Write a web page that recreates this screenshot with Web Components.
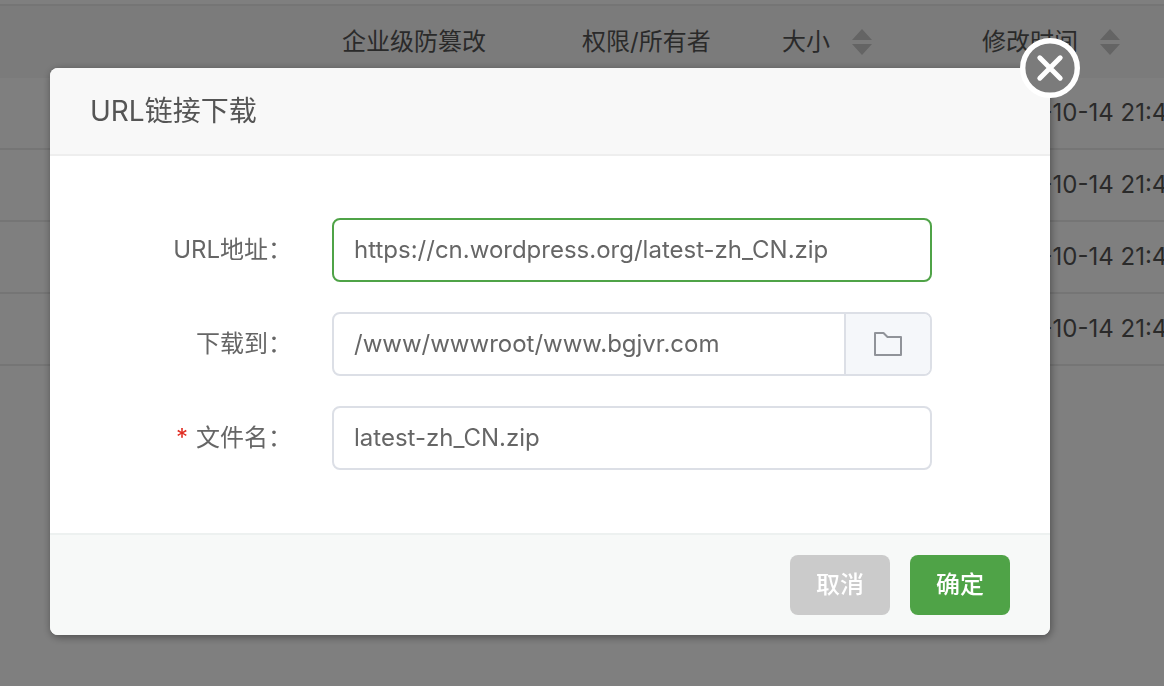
<!DOCTYPE html>
<html lang="zh-CN">
<head>
<meta charset="utf-8">
<title>URL链接下载</title>
<style>
  html, body { height: 100%; margin: 0; }
  body {
    overflow: hidden;
    background: #fff;
    color: #666;
    font: 24px/32px Inter, "Noto Sans CJK SC", sans-serif;
  }
</style>
</head>
<body>
<file-table></file-table>
<modal-dialog heading="URL链接下载">
  <form-field label="URL地址：" name="url" value="https://cn.wordpress.org/latest-zh_CN.zip" active></form-field>
  <form-field label="下载到：" name="path" value="/www/wwwroot/www.bgjvr.com">
    <folder-button slot="append"></folder-button>
  </form-field>
  <form-field label="文件名：" name="filename" value="latest-zh_CN.zip" required></form-field>
  <action-button slot="footer" kind="cancel">取消</action-button>
  <action-button slot="footer" kind="confirm">确定</action-button>
</modal-dialog>

<script>
class BaseElement extends HTMLElement {
  render(html) {
    this.attachShadow({ mode: 'open' }).innerHTML = html;
  }
}

customElements.define('sort-arrows', class extends BaseElement {
  connectedCallback() {
    this.render(`
      <style>
        :host { display: block; width: 20px; height: 28px; }
        svg { display: block; fill: #c8c8c8; }
      </style>
      <svg width="20" height="28" viewBox="0 0 20 28" aria-hidden="true">
        <path d="M10 1 20 12H0zM0 16h20L10 27z"/>
      </svg>`);
  }
});

customElements.define('file-table', class extends BaseElement {
  connectedCallback() {
    const row = '<tr><td></td><td></td><td></td><td></td><td>2024-10-14 21:4</td></tr>';
    this.render(`
      <style>
        :host { display: block; padding-top: 4px; overflow: hidden; color: #555; }
        table { width: 100%; table-layout: fixed; border-collapse: separate; border-spacing: 0; border-top: 2px solid #ebebeb; }
        th, td { box-sizing: border-box; height: 72px; padding: 0 0 0 20px; text-align: left; font-weight: 400; white-space: nowrap; }
        th { background: #f6f6f6; }
        td { border-bottom: 2px solid #ebebeb; }
        .name { width: 322px; }
        .tamper { width: 240px; }
        .fixed { width: 200px; }
        .sort { display: flex; align-items: center; gap: 22px; }
      </style>
      <table>
        <thead><tr>
          <th class="name"></th>
          <th class="tamper">企业级防篡改</th>
          <th class="fixed">权限/所有者</th>
          <th class="fixed"><div class="sort">大小<sort-arrows></sort-arrows></div></th>
          <th><div class="sort">修改时间<sort-arrows></sort-arrows></div></th>
        </tr></thead>
        <tbody>${row.repeat(4)}</tbody>
      </table>`);
  }
});

customElements.define('modal-dialog', class extends BaseElement {
  connectedCallback() {
    this.render(`
      <style>
        :host { display: block; position: fixed; inset: 0; box-sizing: border-box; padding: 68px 114px 0 50px; background: rgba(0, 0, 0, .5); }
        section { position: relative; border-radius: 8px; background: #fff; box-shadow: 1px 2px 8px rgba(0, 0, 0, .4); }
        header { padding: 23px 40px; border-bottom: 2px solid #eee; border-radius: 8px 8px 0 0; background: #f8f8f8; }
        h2 { margin: 0; color: #555; font-size: 28px; line-height: 40px; font-weight: 400; }
        form { display: flex; flex-direction: column; gap: 30px; padding: 62px 118px 63px 0; }
        footer { display: flex; justify-content: flex-end; gap: 20px; padding: 20px 40px; border-top: 2px solid #edf1f0; border-radius: 0 0 8px 8px; background: #f7f9f8; }
        .close { position: absolute; top: -30px; right: -30px; width: 60px; height: 60px; padding: 0; border: 0; border-radius: 50%; background: none; cursor: pointer; }
        svg { display: block; }
      </style>
      <section role="dialog" aria-labelledby="title">
        <header><h2 id="title">${this.getAttribute('heading')}</h2></header>
        <form><slot></slot></form>
        <footer><slot name="footer"></slot></footer>
        <button class="close" type="button" aria-label="关闭">
          <svg width="60" height="60" viewBox="0 0 60 60" fill="none" stroke="#fff">
            <circle cx="30" cy="30" r="27.3" fill="#7b7b7b" stroke-width="5.4"/>
            <path d="M19.8 19.8 40.2 40.2M40.2 19.8 19.8 40.2" stroke-width="5" stroke-linecap="round"/>
          </svg>
        </button>
      </section>`);
  }
});

customElements.define('form-field', class extends BaseElement {
  connectedCallback() {
    const name = this.getAttribute('name');
    this.render(`
      <style>
        :host { display: flex; align-items: center; gap: 40px; }
        label { width: 242px; text-align: right; white-space: nowrap; }
        .star { margin-right: 8px; color: #e02b20; }
        .control { display: flex; flex: 1; min-width: 0; box-sizing: border-box; height: 64px; overflow: hidden; border: 2px solid #dcdfe6; border-radius: 8px; background: #fff; }
        :host([active]) .control { border-color: #4fa347; }
        input { flex: 1; min-width: 0; padding: 0 20px; border: 0; outline: 0; background: none; color: #666; font: inherit; }
      </style>
      <label for="${name}">${this.hasAttribute('required') ? '<span class="star">*</span>' : ''}${this.getAttribute('label')}</label>
      <div class="control">
        <input id="${name}" name="${name}" type="text" value="${this.getAttribute('value')}">
        <slot name="append"></slot>
      </div>`);
  }
});

customElements.define('folder-button', class extends BaseElement {
  connectedCallback() {
    this.render(`
      <style>
        :host { display: flex; }
        button { display: grid; place-items: center; width: 86px; padding: 0; border: 0; border-left: 2px solid #dcdfe6; background: #f5f7fa; cursor: pointer; }
        svg { display: block; }
      </style>
      <button type="button" aria-label="选择目录">
        <svg width="28" height="24" viewBox="0 0 28 24" fill="none" stroke="#909399" stroke-width="2" stroke-linejoin="round">
          <path d="M1 1H9.5L13.5 5H27V23H1Z"/>
        </svg>
      </button>`);
  }
});

customElements.define('action-button', class extends BaseElement {
  connectedCallback() {
    this.render(`
      <style>
        :host { display: block; }
        button { width: 100px; height: 60px; padding: 0; border: 0; border-radius: 8px; background: #cbcbcb; color: #fff; font: inherit; font-weight: 500; cursor: pointer; }
        :host([kind="confirm"]) button { background: #4fa347; }
      </style>
      <button type="button"><slot></slot></button>`);
  }
});
</script>
</body>
</html>
